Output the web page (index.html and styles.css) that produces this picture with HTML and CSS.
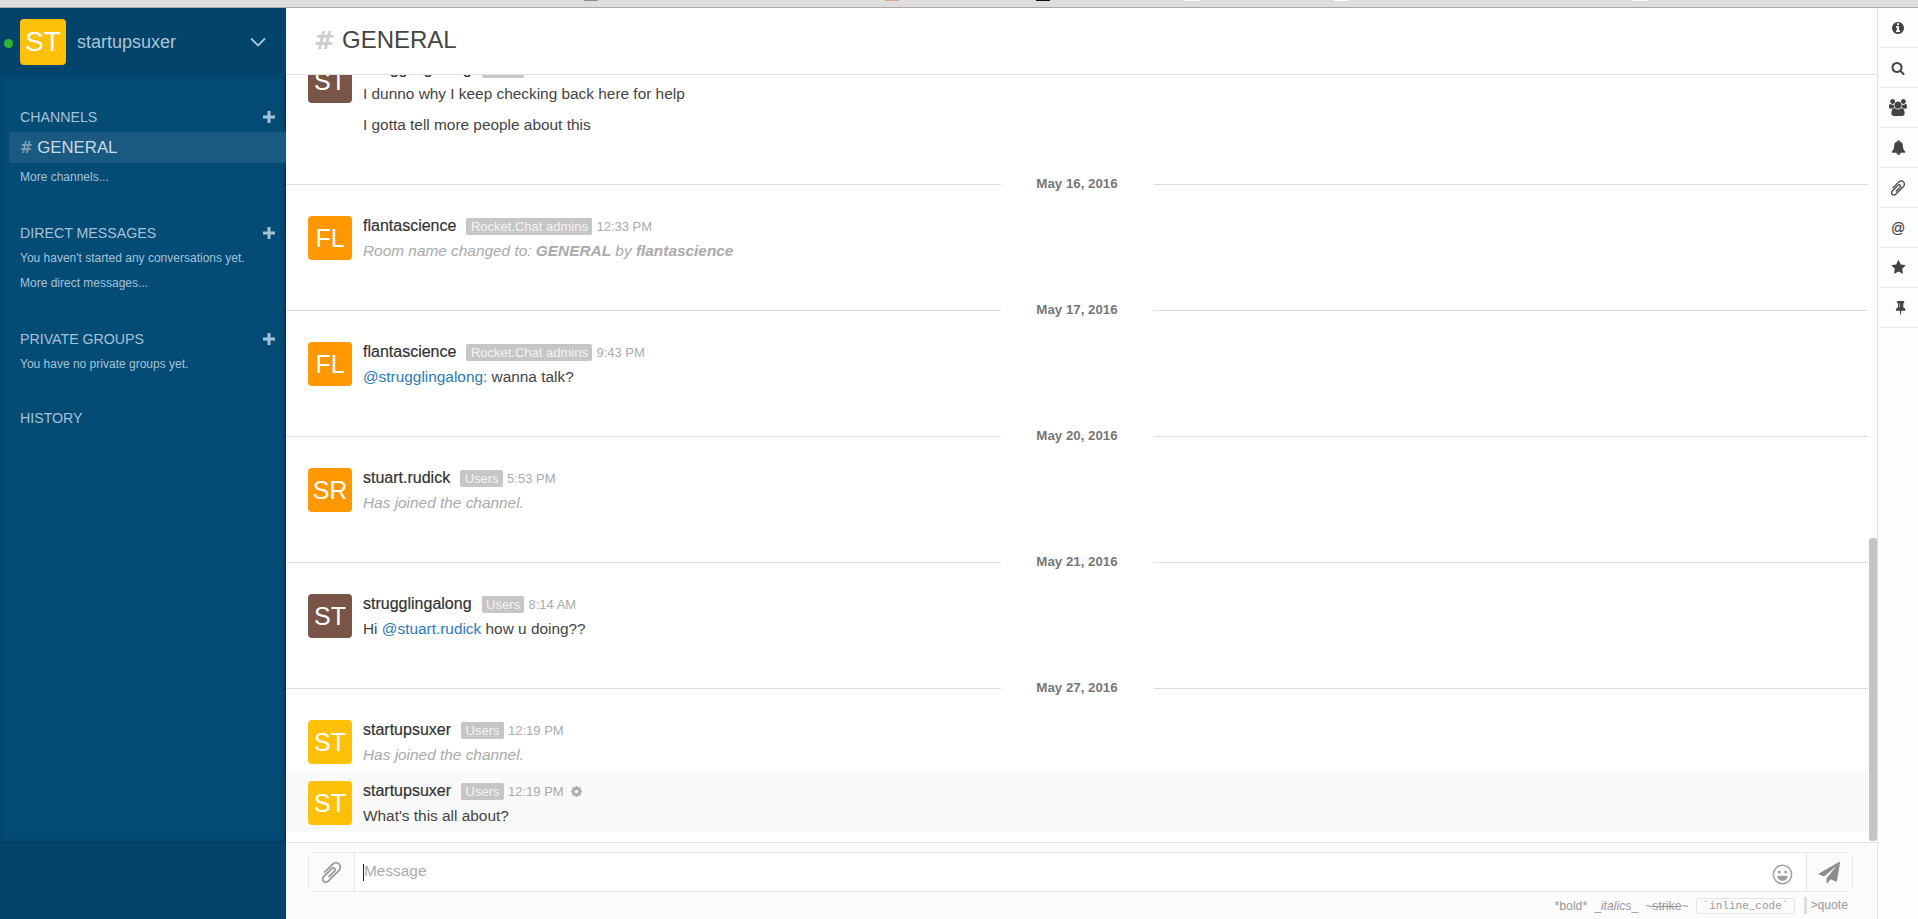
FILE: index.html
```html
<!DOCTYPE html>
<html lang="en">
<head>
    <meta charset="UTF-8">
    <title>GENERAL</title>
    <link rel="stylesheet" href="styles.css">
</head>
<body>
    <svg class="icon-defs" width="0" height="0">
        <symbol id="i-info" viewBox="0 0 1792 1792"><path d="M1152 1376v-160q0-14-9-23t-23-9h-96v-512q0-14-9-23t-23-9h-320q-14 0-23 9t-9 23v160q0 14 9 23t23 9h96v320h-96q-14 0-23 9t-9 23v160q0 14 9 23t23 9h448q14 0 23-9t9-23zm-128-896v-160q0-14-9-23t-23-9h-192q-14 0-23 9t-9 23v160q0 14 9 23t23 9h192q14 0 23-9t9-23zm640 416q0 209-103 385.5t-279.5 279.5-385.5 103-385.5-103-279.5-279.5-103-385.5 103-385.5 279.5-279.5 385.5-103 385.5 103 279.5 279.5 103 385.5z"/></symbol>
        <symbol id="i-search" viewBox="0 0 1792 1792"><path d="M1216 832q0-185-131.5-316.5t-316.5-131.5-316.5 131.5-131.5 316.5 131.5 316.5 316.5 131.5 316.5-131.5 131.5-316.5zm512 832q0 52-38 90t-90 38q-54 0-90-38l-343-342q-179 124-399 124-143 0-273.5-55.5t-225-150-150-225-55.5-273.5 55.5-273.5 150-225 225-150 273.5-55.5 273.5 55.5 225 150 150 225 55.5 273.5q0 220-124 399l343 343q37 37 37 90z"/></symbol>
        <symbol id="i-users" viewBox="0 0 1920 1792"><path d="M593 896q-162 5-265 128h-134q-82 0-138-40.5t-56-118.5q0-353 124-353 6 0 43.5 21t97.5 42.5 119 21.5q67 0 133-23-5 37-5 66 0 139 81 256zm1071 637q0 120-73 189.5t-194 69.5h-874q-121 0-194-69.5t-73-189.5q0-53 3.5-103.5t14-109 26.5-108.5 43-97.5 62-81 85.5-53.5 111.5-20q10 0 43 21.5t73 48 107 48 135 21.5 135-21.5 107-48 73-48 43-21.5q61 0 111.5 20t85.5 53.5 62 81 43 97.5 26.5 108.5 14 109 3.5 103.5zm-1024-1277q0 106-75 181t-181 75-181-75-75-181 75-181 181-75 181 75 75 181zm704 384q0 159-112.5 271.5t-271.5 112.5-271.5-112.5-112.5-271.5 112.5-271.5 271.5-112.5 271.5 112.5 112.5 271.5zm576 225q0 78-56 118.5t-138 40.5h-134q-103-123-265-128 81-117 81-256 0-29-5-66 66 23 133 23 59 0 119-21.5t97.5-42.5 43.5-21q124 0 124 353zm-128-609q0 106-75 181t-181 75-181-75-75-181 75-181 181-75 181 75 75 181z"/></symbol>
        <symbol id="i-bell" viewBox="0 0 1792 1792"><path d="M912 1696q0-16-16-16-59 0-101.5-42.5t-42.5-101.5q0-16-16-16t-16 16q0 73 51.5 124.5t124.5 51.5q16 0 16-16zm816-288q0 52-38 90t-90 38h-448q0 106-75 181t-181 75-181-75-75-181h-448q-52 0-90-38t-38-90q50-42 91-88t85-119.5 74.5-158.5 50-206 19.5-260q0-152 117-282.5t307-158.5q-8-19-8-39 0-40 28-68t68-28 68 28 28 68q0 20-8 39 190 28 307 158.5t117 282.5q0 139 19.5 260t50 206 74.5 158.5 85 119.5 91 88z"/></symbol>
        <symbol id="i-clip" viewBox="0 0 1792 1792"><path d="M1596 1385q0 117-79 196t-196 79q-135 0-235-100l-777-776q-113-115-113-271 0-159 110-270t269-111q158 0 273 113l605 606q10 10 10 22 0 16-30.5 46.5t-46.5 30.5q-13 0-23-10l-606-607q-79-77-181-77-106 0-179 75t-73 181q0 105 76 181l776 777q63 63 145 63 64 0 106-42t42-106q0-82-63-145l-581-581q-26-24-60-24-29 0-48 19t-19 48q0 32 25 59l410 410q10 10 10 22 0 16-31 47t-47 31q-12 0-22-10l-410-410q-63-61-63-149 0-82 57-139t139-57q88 0 149 63l581 581q100 98 100 235z"/></symbol>
        <symbol id="i-star" viewBox="0 0 1792 1792"><path d="M1728 647q0 22-26 48l-363 354 86 500q1 7 1 20 0 21-10.5 35.5t-30.5 14.5q-19 0-40-12l-449-236-449 236q-22 12-40 12-21 0-31.5-14.5t-10.5-35.5q0-6 2-20l86-500-364-354q-25-27-25-48 0-37 56-46l502-73 225-455q19-41 49-41t49 41l225 455 502 73q56 9 56 46z"/></symbol>
        <symbol id="i-pin" viewBox="0 0 1792 1792"><path transform="translate(256 0)" d="M800 864v-448q0-14-9-23t-23-9-23 9-9 23v448q0 14 9 23t23 9 23-9 9-23zm672 352q0 26-19 45t-45 19h-429l-51 483q-2 12-10.5 20.5t-20.5 8.5h-1q-27 0-32-27l-76-485h-404q-26 0-45-19t-19-45q0-123 78.5-221.5t177.5-98.5v-512q-52 0-90-38t-38-90 38-90 90-38h640q52 0 90 38t38 90-38 90-90 38v512q99 0 177.5 98.5t78.5 221.5z"/></symbol>
        <symbol id="i-cog" viewBox="0 0 1792 1792"><path d="M1152 896q0-106-75-181t-181-75-181 75-75 181 75 181 181 75 181-75 75-181zm512-109v222q0 12-8 23t-20 13l-185 28q-19 54-39 91 35 50 107 138 10 12 10 25t-9 23q-27 37-99 108t-94 71q-12 0-26-9l-138-108q-44 23-91 38-16 136-29 186-7 28-36 28h-222q-14 0-24.5-8.5t-11.5-21.5l-28-184q-49-16-90-37l-141 107q-10 9-25 9-14 0-25-11-126-114-165-168-7-10-7-23 0-12 8-23 15-21 51-66.5t54-70.5q-27-50-41-99l-183-27q-13-2-21-12.5t-8-23.5v-222q0-12 8-23t19-13l186-28q14-46 39-92-40-57-107-138-10-12-10-24 0-10 9-23 26-36 98.5-107.5t94.5-71.5q13 0 26 10l138 107q44-23 91-38 16-136 29-186 7-28 36-28h222q14 0 24.5 8.5t11.5 21.5l28 184q49 16 90 37l142-107q9-9 24-9 13 0 25 10 129 119 165 170 7 8 7 22 0 12-8 23-15 21-51 66.5t-54 70.5q26 50 41 98l183 28q13 2 21 12.5t8 23.5z"/></symbol>
        <symbol id="i-send" viewBox="0 0 1792 1792"><path d="M1764 11q33 24 27 64l-256 1536q-5 29-32 45-14 8-31 8-11 0-24-5l-453-185-242 295q-18 23-49 23-13 0-22-4-19-7-30.5-23.5t-11.5-36.5v-349l864-1059-1069 925-395-162q-37-14-40-55-2-40 32-59l1664-960q15-9 32-9 20 0 36 11z"/></symbol>
        <symbol id="i-plus" viewBox="0 0 12 12"><path d="M4.5 0h3v4.5H12v3H7.5V12h-3V7.5H0v-3h4.5z"/></symbol>
    </svg>

    <div class="browser-edge">
        <span class="edge-mark edge-grey"></span>
        <span class="edge-mark edge-orange"></span>
        <span class="edge-mark edge-black"></span>
        <span class="edge-mark edge-white"></span>
        <span class="edge-mark edge-white"></span>
        <span class="edge-mark edge-white edge-last"></span>
    </div>

    <div class="app">
        <aside class="sidebar">
            <div class="account">
                <span class="status-dot"></span>
                <div class="avatar avatar-yellow account-avatar">ST</div>
                <span class="account-name">startupsuxer</span>
                <svg class="chevron" viewBox="0 0 16 10"><path d="M1 1.5l7 7 7-7"/></svg>
            </div>
            <div class="rooms">
                <div class="room-title channels-title">CHANNELS <svg class="add"><use href="#i-plus"/></svg></div>
                <div class="room-item"><span class="room-hash">#</span> GENERAL</div>
                <div class="room-note">More channels...</div>

                <div class="room-title dm-title">DIRECT MESSAGES <svg class="add"><use href="#i-plus"/></svg></div>
                <div class="room-note">You haven't started any conversations yet.</div>
                <div class="room-note">More direct messages...</div>

                <div class="room-title groups-title">PRIVATE GROUPS <svg class="add"><use href="#i-plus"/></svg></div>
                <div class="room-note">You have no private groups yet.</div>

                <div class="room-title history-title">HISTORY</div>
            </div>
            <div class="sidebar-foot"></div>
        </aside>

        <main class="chat">
            <header class="chat-head">
                <span class="head-hash">#</span>
                <h1>GENERAL</h1>
            </header>

            <div class="messages">
                <div class="msg">
                    <div class="avatar avatar-brown">ST</div>
                    <div class="msg-body">
                        <div class="msg-info"><span class="msg-name">strugglingalong</span><span class="badge">Users</span><span class="msg-time">8:02 AM</span></div>
                        <p>I dunno why I keep checking back here for help</p>
                    </div>
                </div>
                <div class="msg msg-seq"><div class="msg-body"><p>I gotta tell more people about this</p></div></div>

                <div class="date-sep"><span>May 16, 2016</span></div>
                <div class="msg">
                    <div class="avatar avatar-orange">FL</div>
                    <div class="msg-body">
                        <div class="msg-info"><span class="msg-name">flantascience</span><span class="badge">Rocket.Chat admins</span><span class="msg-time">12:33 PM</span></div>
                        <p class="system">Room name changed to: <b>GENERAL</b> by <b>flantascience</b></p>
                    </div>
                </div>

                <div class="date-sep"><span>May 17, 2016</span></div>
                <div class="msg">
                    <div class="avatar avatar-orange">FL</div>
                    <div class="msg-body">
                        <div class="msg-info"><span class="msg-name">flantascience</span><span class="badge">Rocket.Chat admins</span><span class="msg-time">9:43 PM</span></div>
                        <p><a class="mention">@strugglingalong:</a> wanna talk?</p>
                    </div>
                </div>

                <div class="date-sep"><span>May 20, 2016</span></div>
                <div class="msg">
                    <div class="avatar avatar-orange">SR</div>
                    <div class="msg-body">
                        <div class="msg-info"><span class="msg-name">stuart.rudick</span><span class="badge">Users</span><span class="msg-time">5:53 PM</span></div>
                        <p class="system">Has joined the channel.</p>
                    </div>
                </div>

                <div class="date-sep"><span>May 21, 2016</span></div>
                <div class="msg">
                    <div class="avatar avatar-brown">ST</div>
                    <div class="msg-body">
                        <div class="msg-info"><span class="msg-name">strugglingalong</span><span class="badge">Users</span><span class="msg-time">8:14 AM</span></div>
                        <p>Hi <a class="mention">@stuart.rudick</a> how u doing??</p>
                    </div>
                </div>

                <div class="date-sep"><span>May 27, 2016</span></div>
                <div class="msg">
                    <div class="avatar avatar-yellow">ST</div>
                    <div class="msg-body">
                        <div class="msg-info"><span class="msg-name">startupsuxer</span><span class="badge">Users</span><span class="msg-time">12:19 PM</span></div>
                        <p class="system">Has joined the channel.</p>
                    </div>
                </div>
                <div class="msg msg-hover">
                    <div class="avatar avatar-yellow">ST</div>
                    <div class="msg-body">
                        <div class="msg-info"><span class="msg-name">startupsuxer</span><span class="badge">Users</span><span class="msg-time">12:19 PM</span><svg class="msg-cog"><use href="#i-cog"/></svg></div>
                        <p>What's this all about?</p>
                    </div>
                </div>
                <div class="scroll-thumb"></div>
            </div>

            <footer class="composer">
                <div class="input-box">
                    <div class="input-cell"><svg class="attach"><use href="#i-clip"/></svg></div>
                    <div class="input-field">
                        <span class="caret"></span><span class="placeholder">Message</span>
                        <svg class="smile" viewBox="0 0 22 22">
                            <circle cx="11" cy="11" r="9.6"/>
                            <circle class="smile-eye" cx="7.6" cy="8.4" r="1.6"/>
                            <circle class="smile-eye" cx="14.4" cy="8.4" r="1.6"/>
                            <path class="smile-mouth" d="M5.5 12.2h11c0 3.2-2.4 5.3-5.5 5.3s-5.5-2.1-5.5-5.3z"/>
                        </svg>
                    </div>
                    <div class="input-cell send-cell"><svg class="send"><use href="#i-send"/></svg></div>
                </div>
                <div class="format-tips">
                    <span>*bold*</span>
                    <span>_<i>italics</i>_</span>
                    <span>~<s>strike</s>~</span>
                    <code>`inline_code`</code>
                    <span class="quote-tip">&gt;quote</span>
                </div>
            </footer>
        </main>

        <nav class="toolbar">
            <div class="tool"><svg class="tool-icon"><use href="#i-info"/></svg></div>
            <div class="tool"><svg class="tool-icon"><use href="#i-search"/></svg></div>
            <div class="tool"><svg class="tool-icon tool-wide"><use href="#i-users"/></svg></div>
            <div class="tool"><svg class="tool-icon tool-bell"><use href="#i-bell"/></svg></div>
            <div class="tool"><svg class="tool-icon tool-clip"><use href="#i-clip"/></svg></div>
            <div class="tool tool-at">@</div>
            <div class="tool"><svg class="tool-icon tool-bell"><use href="#i-star"/></svg></div>
            <div class="tool"><svg class="tool-icon tool-bell"><use href="#i-pin"/></svg></div>
        </nav>
    </div>
</body>
</html>
```

FILE: styles.css
```css
* {
    box-sizing: border-box;
}

body {
    margin: 0;
    height: 919px;
    display: flex;
    flex-direction: column;
    overflow: hidden;
    font-family: 'Liberation Sans', Arial, sans-serif;
    color: #444444;
    background-color: #ffffff;
}

.icon-defs {
    position: absolute;
}

.browser-edge {
    flex: 0 0 8px;
    display: flex;
    align-items: flex-start;
    background-color: #dedede;
    border-bottom: 1px solid #a9a9a9;
}

.edge-mark {
    width: 14px;
    height: 1px;
}

.edge-grey {
    margin-left: 584px;
    background-color: #8d8d8d;
}

.edge-orange {
    margin-left: 287px;
    background-color: #e0a48c;
}

.edge-black {
    margin-left: 137px;
    background-color: #111111;
}

.edge-white {
    margin-left: 135px;
    background-color: #ffffff;
}

.edge-last {
    margin-left: 285px;
}

.app {
    flex: 1;
    display: flex;
    min-height: 0;
}

/* shared avatar */
.avatar {
    flex: 0 0 auto;
    width: 44px;
    height: 44px;
    border-radius: 4px;
    text-align: center;
    font-size: 25px;
    line-height: 44px;
    color: #ffffff;
}

.avatar-yellow {
    background-color: #ffc107;
}

.avatar-orange {
    background-color: #ff9800;
}

.avatar-brown {
    background-color: #795548;
}

/* sidebar */
.sidebar {
    width: 286px;
    display: flex;
    flex-direction: column;
    background-color: #044b76;
    color: #a5c3d7;
    box-shadow: inset -2px 0 3px rgba(0, 0, 0, 0.2);
}

.account {
    flex: 0 0 66px;
    display: flex;
    align-items: center;
    padding: 2px 20px 0;
    position: relative;
    background-color: #04436a;
}

.status-dot {
    position: absolute;
    left: 4px;
    top: 31px;
    width: 9px;
    height: 9px;
    border-radius: 50%;
    background-color: #2fb52f;
}

.account-avatar {
    width: 46px;
    height: 46px;
    font-size: 28px;
    line-height: 46px;
}

.account-name {
    flex: 1;
    margin-left: 11px;
    font-size: 18px;
    color: #a9c6d9;
}

.chevron {
    width: 16px;
    height: 10px;
    fill: none;
    stroke: #a9c6d9;
    stroke-width: 1.8;
}

.rooms {
    flex: 1;
    padding-top: 33px;
    font-size: 12px;
    box-shadow: inset 0 0 6px rgba(0, 0, 0, 0.15);
}

.room-title {
    display: flex;
    justify-content: space-between;
    align-items: center;
    height: 20px;
    padding: 0 11px 0 20px;
    font-size: 14.2px;
    color: #a5c3d7;
}

.add {
    width: 12px;
    height: 12px;
    fill: #a5c3d7;
}

.room-item {
    height: 31px;
    margin: 5px 0 0 9px;
    padding-left: 11px;
    line-height: 31px;
    font-size: 16.8px;
    color: #c9dbe7;
    background-color: #1a5a80;
}

.room-hash {
    font-family: 'DejaVu Sans', sans-serif;
    font-size: 15px;
    font-weight: bold;
    color: #7f9eb3;
}

.room-note {
    height: 25px;
    padding-left: 20px;
    line-height: 25px;
    font-size: 12px;
}

.room-item + .room-note {
    margin-top: 2px;
}

.room-title + .room-note {
    margin-top: 3px;
}

.dm-title {
    margin-top: 33px;
}

.groups-title {
    margin-top: 33px;
}

.history-title {
    margin-top: 31px;
}

.sidebar-foot {
    flex: 0 0 77px;
    background-color: #04436a;
    border-top: 1px solid #033c60;
}

/* chat */
.chat {
    flex: 1;
    min-width: 0;
    display: flex;
    flex-direction: column;
}

.chat-head {
    flex: 0 0 67px;
    display: flex;
    align-items: center;
    padding: 0 0 2px 28px;
    border-bottom: 1px solid #e2e2e2;
}

.head-hash {
    width: 28px;
    font-family: 'DejaVu Sans', sans-serif;
    font-size: 25px;
    font-weight: bold;
    color: #cccccc;
}

.chat-head h1 {
    margin: 0;
    font-size: 24px;
    font-weight: normal;
    color: #444444;
}

.messages {
    flex: 1;
    min-height: 0;
    position: relative;
    display: flex;
    flex-direction: column;
    justify-content: flex-end;
    overflow: hidden;
    padding: 0 9px 10px 0;
}

.date-sep {
    flex: 0 0 19px;
    display: flex;
    align-items: center;
    margin: 34px 0 12px;
    font-size: 13.3px;
    font-weight: bold;
    color: #777777;
}

.date-sep::before,
.date-sep::after {
    content: '';
    flex: 1;
    border-top: 1px solid #dddddd;
}

.date-sep span {
    width: 153px;
    text-align: center;
    padding-bottom: 2px;
}

.msg {
    flex: 0 0 auto;
    display: flex;
    min-height: 61px;
    padding: 10px 0 6px 22px;
}

.msg-seq {
    min-height: 0;
    padding: 5px 0 6px 66px;
}

.msg-hover {
    background-color: #f9f9f9;
}

.msg-body {
    margin-left: 11px;
}

.msg-info {
    display: flex;
    align-items: center;
    height: 20px;
    margin-bottom: 5px;
}

.msg-name {
    font-size: 16px;
    color: #333333;
    -webkit-text-stroke: 0.2px #333333;
}

.badge {
    height: 17px;
    margin: 1px 4px 0 10px;
    padding: 0 4.5px;
    border-radius: 2px;
    font-size: 13px;
    line-height: 17px;
    color: #f4f4f4;
    background-color: #c6c6c6;
}

.msg-time {
    margin-top: 1px;
    font-size: 13px;
    color: #aaaaaa;
}

.msg-cog {
    width: 13px;
    height: 13px;
    margin: 1px 0 0 6px;
    fill: #aaaaaa;
}

.msg p {
    margin: 0;
    font-size: 15.4px;
    line-height: 20px;
    color: #444444;
}

.msg p.system {
    font-style: italic;
    color: #aaaaaa;
}

.mention {
    color: #2a7ab8;
}

.scroll-thumb {
    position: absolute;
    right: 0;
    bottom: 1px;
    width: 8px;
    height: 303px;
    border-radius: 3px;
    background-color: #c4c4c4;
}

.composer {
    flex: 0 0 77px;
    padding: 9px 24px 0 22px;
    background-color: #fcfcfc;
    border-top: 1px solid #e2e2e2;
}

.input-box {
    display: flex;
    height: 40px;
    border: 1px solid #e8e8e8;
    border-radius: 5px;
    background-color: #ffffff;
}

.input-cell {
    flex: 0 0 46px;
    display: flex;
    align-items: center;
    justify-content: center;
    background-color: #fbfbfb;
    border-right: 1px solid #e8e8e8;
}

.send-cell {
    border-right: 0;
    border-left: 1px solid #e8e8e8;
}

.attach {
    width: 25px;
    height: 25px;
    fill: #999999;
    transform: scaleX(-1);
}

.send {
    width: 21px;
    height: 21px;
    fill: #8c8c8c;
}

.input-field {
    flex: 1;
    display: flex;
    align-items: center;
    padding: 0 13px 0 8px;
    font-size: 15.4px;
}

.caret {
    width: 1px;
    height: 17px;
    background-color: #222222;
}

.placeholder {
    flex: 1;
    padding-bottom: 2px;
    color: #aaaaaa;
}

.smile {
    width: 21px;
    height: 21px;
    margin-top: 4px;
    fill: none;
    stroke: #a0a0a0;
    stroke-width: 1.6;
}

.smile-eye {
    fill: #a0a0a0;
    stroke: none;
}

.smile-mouth {
    fill: #a0a0a0;
    stroke: none;
}

.format-tips {
    display: flex;
    justify-content: flex-end;
    align-items: center;
    gap: 7px;
    margin-top: 5px;
    padding-right: 5px;
    font-size: 12.2px;
    color: #9a9a9a;
}

.format-tips code {
    height: 16px;
    padding: 0 6px;
    border: 1px solid #e4e4e4;
    border-radius: 3px;
    font-family: 'Liberation Mono', monospace;
    font-size: 11px;
    line-height: 15px;
    background-color: #fbfbfb;
}

.quote-tip {
    height: 17px;
    margin-left: 2px;
    padding-left: 3px;
    line-height: 16px;
    border-left: 3px solid #dddddd;
}

/* right toolbar */
.toolbar {
    flex: 0 0 41px;
    background-color: #fdfdfd;
    border-left: 1px solid #e2e2e2;
}

.tool {
    display: flex;
    align-items: center;
    justify-content: center;
    height: 40px;
    border-bottom: 1px solid #ececec;
}

.tool-icon {
    width: 14px;
    height: 14px;
    fill: #444444;
}

.tool-wide {
    width: 18px;
    height: 17px;
}

.tool-bell {
    width: 15px;
    height: 15px;
}

.tool-clip {
    width: 18px;
    height: 18px;
    transform: scaleX(-1);
}

.tool-at {
    font-size: 14px;
    color: #444444;
    -webkit-text-stroke: 0.2px #444444;
}
```
